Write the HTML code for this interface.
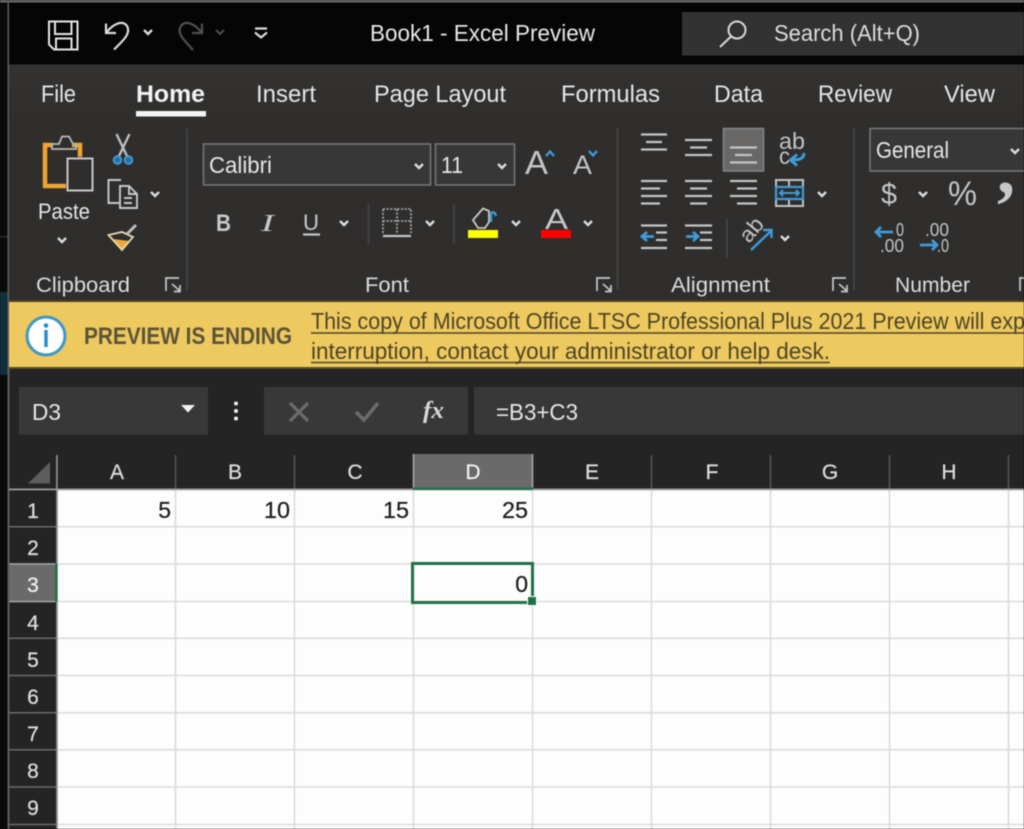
<!DOCTYPE html>
<html><head><meta charset="utf-8"><title>Book1 - Excel Preview</title>
<style>
html,body{margin:0;padding:0;background:#0a0a0a;width:1024px;height:829px;overflow:hidden}
svg{display:block;position:absolute;left:0;top:0;filter:blur(.5px)}
text{font-family:"Liberation Sans",sans-serif;fill:#e6e6e6;stroke:currentColor;stroke-width:0}
.ic{fill:none;stroke:#c8c8c8;stroke-width:2}
.ln{stroke:#c4c4c4;stroke-width:2.2;fill:none}
.ch{fill:none;stroke:#dcdcdc;stroke-width:2}
.bl{fill:none;stroke:#3f9bd8;stroke-width:2.4}
.cell{font-size:23px;fill:#1e1e1e;stroke:#1e1e1e;stroke-width:.25px}
.hd{font-size:21px;fill:#dcdcdc;stroke:#dcdcdc;stroke-width:.25px;text-anchor:middle}
</style></head><body>
<svg width="1024" height="829" viewBox="0 0 1024 829" xmlns="http://www.w3.org/2000/svg">
<defs>
<path id="chev" d="M-4-2l4 4 4-4"/>
<path id="dl" d="M0 13V0h13M6 6l8 7M14 7v6.500H8"/>
<linearGradient id="rb" x1="0" y1="0" x2="0" y2="1"><stop offset="0" stop-color="#343332"/><stop offset="1" stop-color="#2f2e2d"/></linearGradient>
</defs>

<!-- window edge -->
<rect x="0" y="0" width="1024" height="829" fill="#0a0a0a"/>
<rect x="0" y="0" width="1024" height="2.500" fill="#6a6a6a"/>
<rect x="0" y="236" width="8" height="1.500" fill="#2a2a2a"/>
<rect x="0" y="292" width="8" height="83" fill="#12303c"/>
<rect x="7.500" y="0" width="2" height="829" fill="#5e5e5e"/>

<!-- title bar -->
<rect x="9" y="2.500" width="1015" height="62" fill="#050505"/>
<rect x="682" y="12" width="342" height="43.500" fill="#323232"/>
<path class="ic" style="stroke:#e4e4e4" d="M49 21.500H77.500V49.500H54L49 44.500ZM55 21.500V34H71.500V21.500M56 49.500V38.500H71.500V49.500"/>
<path class="ic" style="stroke:#dcdcdc;stroke-width:2.200" d="M106 23.500V33H116M106 33C112 25 122 19 127 26C131 33 124 40 114 49.500"/>
<use href="#chev" x="148" y="32" class="ch" style="stroke-width:2.400"/>
<path class="ic" style="stroke:#505050;stroke-width:2.200" d="M202 23.500V33H192M202 33C196 25 186 19 181 26C176 33 184 40 193 50"/>
<use href="#chev" x="220" y="32" class="ch" style="stroke:#505050"/>
<path class="ch" style="stroke-width:2.200" d="M255 28.500H267M255 32.500L261 37.500L267 32.500"/>
<text x="370" y="41" font-size="23" textLength="225" lengthAdjust="spacingAndGlyphs" style="fill:#e8e8e8">Book1  -  Excel Preview</text>
<circle cx="737" cy="30" r="8.500" class="ic" style="stroke:#d8d8d8"/>
<path class="ic" style="stroke:#d8d8d8" d="M731 36.500L720 47"/>
<text x="774" y="41" font-size="23" textLength="146" lengthAdjust="spacingAndGlyphs" style="fill:#dcdcdc">Search (Alt+Q)</text>

<!-- ribbon -->
<rect x="9" y="64.500" width="1015" height="236.500" fill="#2f2e2d"/>
<rect x="9" y="64.500" width="1015" height="60" fill="url(#rb)"/>
<g font-size="24" style="fill:#e4e4e4">
<text x="41" y="102" textLength="35" lengthAdjust="spacingAndGlyphs">File</text>
<text x="136" y="102" textLength="69" lengthAdjust="spacingAndGlyphs" font-weight="bold" style="fill:#f2f2f2">Home</text>
<text x="256" y="102" textLength="60" lengthAdjust="spacingAndGlyphs">Insert</text>
<text x="374" y="102" textLength="132" lengthAdjust="spacingAndGlyphs">Page Layout</text>
<text x="561" y="102" textLength="99" lengthAdjust="spacingAndGlyphs">Formulas</text>
<text x="714" y="102" textLength="49" lengthAdjust="spacingAndGlyphs">Data</text>
<text x="818" y="102" textLength="74" lengthAdjust="spacingAndGlyphs">Review</text>
<text x="944" y="102" textLength="51" lengthAdjust="spacingAndGlyphs">View</text>
</g>
<rect x="136" y="111" width="70" height="5.500" fill="#f4f4f4"/>

<!-- group separators -->
<path stroke="#484848" stroke-width="1.500" d="M187 128V290M617.500 128V290M854 128V290M368.500 205V243M454 205V243M727 219V258"/>

<!-- clipboard -->
<path fill="none" stroke="#f0a32e" stroke-width="4.500" d="M66 186H45V145H53M72 145H80V157"/>
<path class="ic" d="M52 149V144H59L62 136.500H69L73 144H76V149Z" style="stroke:#b8b8b8;stroke-width:1.800"/>
<rect x="67.500" y="158.500" width="25" height="32" class="ic" style="stroke:#c8c8c8"/>
<path class="ic" d="M116.500 134L127 156M129.500 134L119 156" style="stroke:#bdbdbd;stroke-width:2.400"/>
<circle cx="117.500" cy="160" r="3.800" fill="#2a6ea0" stroke="#3f9bd8" stroke-width="2"/>
<circle cx="128.500" cy="160" r="3.800" fill="#2a6ea0" stroke="#3f9bd8" stroke-width="2"/>
<path class="ic" style="stroke-width:1.900" d="M121 180H108.500V203H119M120 186H129L137 194V208H120ZM129 186V194H137M124 198H132M124 203H132"/>
<use href="#chev" x="155" y="194" class="ch" style="stroke-width:2.400"/>
<path fill="#f0a838" d="M113 239L129 241L122 250Z"/>
<path fill="none" stroke="#e6d9b0" stroke-width="1.800" d="M108.500 235L122 232L133 237L122 250Z"/>
<path class="ic" style="stroke:#bdbdbd;stroke-width:3" d="M127 234L136 225"/>
<text x="38" y="219" font-size="22" textLength="52" lengthAdjust="spacingAndGlyphs">Paste</text>
<use href="#chev" x="62" y="240" class="ch" style="stroke-width:2.400"/>
<text x="36" y="292" font-size="21" textLength="94" lengthAdjust="spacingAndGlyphs" style="fill:#dcdcdc">Clipboard</text>
<use href="#dl" x="166" y="278" class="ic" style="stroke-width:1.700"/>

<!-- font -->
<rect x="203.500" y="144" width="227" height="41" fill="#383737" stroke="#797979" stroke-width="1.500"/>
<rect x="435.500" y="144" width="79" height="41" fill="#383737" stroke="#797979" stroke-width="1.500"/>
<text x="209" y="173" font-size="23" textLength="63" lengthAdjust="spacingAndGlyphs">Calibri</text>
<text x="441" y="173" font-size="23" textLength="22" lengthAdjust="spacingAndGlyphs">11</text>
<use href="#chev" x="419" y="166" class="ch" style="stroke-width:2.400"/>
<use href="#chev" x="502" y="166" class="ch" style="stroke-width:2.400"/>
<text x="525" y="174" font-size="33" textLength="23" lengthAdjust="spacingAndGlyphs" style="fill:#c4c4c4">A</text>
<path class="bl" d="M546 156L550 151.500L554 156"/>
<text x="573" y="174" font-size="27" textLength="19" lengthAdjust="spacingAndGlyphs" style="fill:#c4c4c4">A</text>
<path class="bl" d="M589 151L593 155.500L597 151"/>
<text x="216" y="231" font-size="24" font-weight="bold" style="fill:#c8c8c8" textLength="15" lengthAdjust="spacingAndGlyphs">B</text>
<text x="261" y="231" font-size="24" font-style="italic" style="fill:#c8c8c8;font-family:'Liberation Serif',serif" textLength="13" lengthAdjust="spacingAndGlyphs">I</text>
<text x="303" y="230" font-size="22" style="fill:#c8c8c8" textLength="16" lengthAdjust="spacingAndGlyphs">U</text>
<path class="ln" d="M303 234.500H320"/>
<use href="#chev" x="344" y="223" class="ch" style="stroke-width:2.400"/>
<path fill="none" stroke="#b4b4b4" stroke-width="1.600" stroke-dasharray="2 1.600" d="M383 209H411V233M383 233V209M397 209V233M383 221H411"/>
<path class="ln" d="M383 236H411"/>
<use href="#chev" x="430" y="223" class="ch" style="stroke-width:2.400"/>
<path class="ic" d="M473 220L483 208.500L489 211V222L485 228H478Z" style="stroke-width:1.800"/>
<path class="bl" d="M491 222V214C492 211 495 212 496 216"/>
<rect x="468" y="230" width="30" height="8" fill="#ffff00"/>
<use href="#chev" x="516" y="223" class="ch" style="stroke-width:2.400"/>
<text x="545" y="229" font-size="29" textLength="23" lengthAdjust="spacingAndGlyphs" style="fill:#c8c8c8">A</text>
<rect x="541" y="230" width="30" height="8" fill="#fe0000"/>
<use href="#chev" x="588" y="223" class="ch" style="stroke-width:2.400"/>
<text x="365" y="292" font-size="21" textLength="44" lengthAdjust="spacingAndGlyphs" style="fill:#dcdcdc">Font</text>
<use href="#dl" x="597" y="278" class="ic" style="stroke-width:1.700"/>

<!-- alignment -->
<rect x="723.500" y="128.500" width="40" height="42.500" fill="#686766" stroke="#868686" stroke-width="1.500"/>
<path class="ln" d="M641 134.500H667M646 142H662M641 149.500H667"/>
<path class="ln" d="M685 140H712M690 147.500H707M685 155H712"/>
<path class="ln" d="M730 147.500H757M735 155H752M730 162.500H757"/>
<text x="779" y="149" font-size="23" textLength="26" lengthAdjust="spacingAndGlyphs" style="fill:#c4c4c4">ab</text>
<text x="779" y="164" font-size="23" textLength="11" lengthAdjust="spacingAndGlyphs" style="fill:#c4c4c4">c</text>
<path class="bl" d="M804 153C804 159 799 160 791 160M797 154.500L790.500 160L797 165.500" style="stroke-width:3"/>
<path class="ln" d="M641 181H667M641 188.500H660M641 196H667M641 203.500H660"/>
<path class="ln" d="M685 181H712M690 188.500H707M685 196H712M690 203.500H707"/>
<path class="ln" d="M730 181H757M737 188.500H757M730 196H757M737 203.500H757"/>
<rect x="776" y="180" width="27" height="26" fill="none" stroke="#c4c4c4" stroke-width="2"/>
<path stroke="#c4c4c4" stroke-width="2" d="M789 180V187M789 199V206"/>
<rect x="776" y="187" width="27" height="12" fill="none" stroke="#3f9bd8" stroke-width="2.200"/>
<path class="bl" d="M780 193H799M783 190L780 193L783 196M796 190L799 193L796 196" style="stroke-width:2"/>
<use href="#chev" x="822" y="194" class="ch" style="stroke-width:2.400"/>
<path class="ln" d="M641 225.500H667M656 232.500H667M656 240H667M641 248H667"/>
<path class="bl" d="M642 236.500H654M647 232L642 236.500L647 241" style="stroke-width:2.800"/>
<path class="ln" d="M685 225.500H712M700 232.500H712M700 240H712M685 248H712"/>
<path class="bl" d="M686 236.500H698M693 232L698 236.500L693 241" style="stroke-width:2.800"/>
<text x="0" y="0" font-size="22" transform="translate(749,244) rotate(-50)" textLength="25" lengthAdjust="spacingAndGlyphs" style="fill:#c4c4c4">ab</text>
<path class="bl" d="M751 250L771 231M763 230H771.500V238"/>
<use href="#chev" x="785" y="238" class="ch" style="stroke-width:2.400"/>
<text x="671" y="292" font-size="21" textLength="99" lengthAdjust="spacingAndGlyphs" style="fill:#dcdcdc">Alignment</text>
<use href="#dl" x="833" y="278" class="ic" style="stroke-width:1.700"/>

<!-- number -->
<rect x="870" y="128.500" width="160" height="42.500" fill="#383737" stroke="#797979" stroke-width="1.500"/>
<text x="876" y="158" font-size="23" textLength="73" lengthAdjust="spacingAndGlyphs">General</text>
<use href="#chev" x="1015" y="151" class="ch" style="stroke-width:2.400"/>
<text x="881" y="204" font-size="30" textLength="16" lengthAdjust="spacingAndGlyphs" style="fill:#c4c4c4">$</text>
<use href="#chev" x="923" y="194" class="ch" style="stroke-width:2.400"/>
<text x="948" y="205" font-size="34" textLength="29" lengthAdjust="spacingAndGlyphs" style="fill:#c4c4c4">%</text>
<text x="997" y="193" font-size="72" font-weight="bold" style="fill:#c8c8c8;font-family:'Liberation Serif',serif">,</text>
<text x="896" y="236" font-size="18" textLength="8" lengthAdjust="spacingAndGlyphs" style="fill:#c4c4c4">0</text>
<text x="880" y="252" font-size="18" textLength="24" lengthAdjust="spacingAndGlyphs" style="fill:#c4c4c4">.00</text>
<path class="bl" d="M876 232H893M881 227L876 232L881 237" style="stroke-width:2.800"/>
<text x="925" y="236" font-size="18" textLength="24" lengthAdjust="spacingAndGlyphs" style="fill:#c4c4c4">.00</text>
<text x="937" y="252" font-size="18" textLength="12" lengthAdjust="spacingAndGlyphs" style="fill:#c4c4c4">.0</text>
<path class="bl" d="M920 245H937M932 240L937 245L932 250" style="stroke-width:2.800"/>
<text x="895" y="292" font-size="21" textLength="75" lengthAdjust="spacingAndGlyphs" style="fill:#dcdcdc">Number</text>
<use href="#dl" x="1020" y="278" class="ic" style="stroke-width:1.700"/>

<!-- banner -->
<rect x="9" y="300" width="1015" height="2" fill="#4a3f25"/>
<rect x="9" y="302" width="1015" height="65" fill="#edc95f"/>
<rect x="9" y="367" width="1015" height="2" fill="#5a4d2a"/>
<circle cx="46" cy="336" r="19" fill="#fdfdfd" stroke="#3e97c9" stroke-width="3"/>
<circle cx="46" cy="325.500" r="2.300" fill="#2a8cc8"/>
<rect x="44.300" y="330" width="3.400" height="17" fill="#2a8cc8"/>
<text x="84" y="344" font-size="24" font-weight="bold" textLength="208" lengthAdjust="spacingAndGlyphs" style="fill:#5b5438">PREVIEW IS ENDING</text>
<text x="311" y="329" font-size="23" textLength="714" lengthAdjust="spacingAndGlyphs" style="fill:#4f4526">This copy of Microsoft Office LTSC Professional Plus 2021 Preview will exp</text>
<text x="311" y="359" font-size="23" textLength="519" lengthAdjust="spacingAndGlyphs" style="fill:#4f4526">interruption, contact your administrator or help desk.</text>
<path stroke="#4f4526" stroke-width="1.600" d="M311 333H1024M311 362.500H830"/>

<!-- formula bar -->
<rect x="9.500" y="369" width="1015" height="460" fill="#242424"/>
<rect x="19" y="387" width="189" height="47.500" fill="#383838"/>
<text x="32" y="420" font-size="23" textLength="29" lengthAdjust="spacingAndGlyphs">D3</text>
<path d="M181 405H195L188 412.500Z" fill="#f2f2f2"/>
<circle cx="236" cy="403.500" r="2" fill="#f0f0f0"/>
<circle cx="236" cy="411" r="2" fill="#f0f0f0"/>
<circle cx="236" cy="418.500" r="2" fill="#f0f0f0"/>
<rect x="264" y="387" width="204" height="47.500" fill="#383838"/>
<path fill="none" stroke="#6c6c6c" stroke-width="3.200" d="M290 403L308 421M308 403L290 421"/>
<path fill="none" stroke="#6c6c6c" stroke-width="3.600" d="M356 412L364 420L378 403"/>
<text x="423" y="418" font-size="24" font-weight="bold" font-style="italic" textLength="21" lengthAdjust="spacingAndGlyphs" style="fill:#d8d8d8;font-family:'Liberation Serif',serif">fx</text>
<rect x="474" y="387" width="550" height="47.500" fill="#383838"/>
<text x="496" y="420" font-size="23" textLength="82" lengthAdjust="spacingAndGlyphs">=B3+C3</text>

<!-- grid -->
<rect x="57" y="489" width="967" height="340" fill="#fdfdfd"/>
<path stroke="#dcdcdc" stroke-width="1.600" d="M57 526.700H1024M57 564H1024M57 601.500H1024M57 638.300H1024M57 675.500H1024M57 712.800H1024M57 749.800H1024M57 787H1024M57 824.500H1024"/>
<path stroke="#dcdcdc" stroke-width="1.600" d="M175.500 489V829M294.500 489V829M413.500 489V829M532.500 489V829M651.500 489V829M770.500 489V829M889.500 489V829M1008.500 489V829"/>

<!-- headers -->
<path stroke="#555" stroke-width="1.500" d="M175.500 455V489M294.500 455V489M413.500 455V489M532.500 455V489M651.500 455V489M770.500 455V489M889.500 455V489M1008.500 455V489"/>
<path stroke="#6a6a6a" stroke-width="1.500" d="M9 526.700H56M9 564H56M9 601.500H56M9 638.300H56M9 675.500H56M9 712.800H56M9 749.800H56M9 787H56M9 824.500H56"/>
<path d="M28 483.500L50 462V483.500Z" fill="#5e5e5e"/>
<rect x="56" y="455" width="1.800" height="374" fill="#8a8a8a"/>
<rect x="9" y="488.500" width="1015" height="1.800" fill="#9a9a9a"/>
<rect x="413" y="454" width="120" height="34" fill="#6a6a6a"/>
<path stroke="#a8a8a8" stroke-width="1.500" d="M413.500 454V488M532.500 454V488"/>
<rect x="413" y="487.500" width="120" height="2.500" fill="#217346"/>
<rect x="9.500" y="563.500" width="45.500" height="38.500" fill="#6a6a6a"/>
<path stroke="#a4a4a4" stroke-width="1.600" d="M9.500 564H55M9.500 601.500H55"/>
<rect x="55" y="564" width="2.500" height="37.500" fill="#217346"/>
<text class="hd" x="117" y="479">A</text>
<text class="hd" x="235" y="479">B</text>
<text class="hd" x="355" y="479">C</text>
<text class="hd" x="473" y="479" style="fill:#f0f0f0;stroke:#f0f0f0">D</text>
<text class="hd" x="592" y="479">E</text>
<text class="hd" x="712" y="479">F</text>
<text class="hd" x="830" y="479">G</text>
<text class="hd" x="949" y="479">H</text>
<text class="hd" x="33" y="518">1</text>
<text class="hd" x="33" y="555">2</text>
<text class="hd" x="33" y="592" style="fill:#f0f0f0;stroke:#f0f0f0">3</text>
<text class="hd" x="33" y="630">4</text>
<text class="hd" x="33" y="667">5</text>
<text class="hd" x="33" y="704">6</text>
<text class="hd" x="33" y="741">7</text>
<text class="hd" x="33" y="778">8</text>
<text class="hd" x="33" y="815">9</text>

<!-- cell values -->
<g text-anchor="end">
<text class="cell" x="171" y="518" style="fill:#1e1e1e">5</text>
<text class="cell" x="290" y="518" textLength="26" lengthAdjust="spacingAndGlyphs" style="fill:#1e1e1e">10</text>
<text class="cell" x="409" y="518" textLength="26" lengthAdjust="spacingAndGlyphs" style="fill:#1e1e1e">15</text>
<text class="cell" x="528" y="518" textLength="26" lengthAdjust="spacingAndGlyphs" style="fill:#1e1e1e">25</text>
<text class="cell" x="528" y="592" style="fill:#1e1e1e">0</text>
</g>

<!-- selected cell -->
<rect x="412.500" y="563.500" width="120" height="39" fill="none" stroke="#1f7246" stroke-width="3"/>
<rect x="527.500" y="596.500" width="9" height="9" fill="#1f7246" stroke="#fff" stroke-width="1"/>
</svg>
</body></html>
